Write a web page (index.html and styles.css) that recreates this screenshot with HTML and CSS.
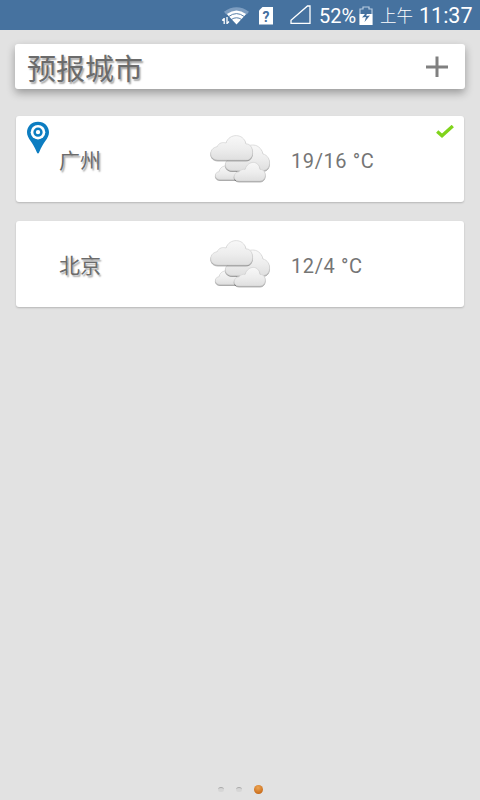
FILE: index.html
```html
<!DOCTYPE html>
<html lang="zh-CN">
<head>
<meta charset="utf-8">
<title>预报城市</title>
<link rel="stylesheet" href="styles.css">
</head>
<body>
<svg class="defs" width="0" height="0" aria-hidden="true">
  <defs>
    <linearGradient id="cloudFill" x1="0" y1="0" x2="0" y2="1">
      <stop offset="0" stop-color="#f8f8f8"/><stop offset=".55" stop-color="#ededed"/><stop offset="1" stop-color="#dfdfdf"/>
    </linearGradient>
    <symbol id="clouds" viewBox="0 0 64 52">
      <g class="cloud" fill="url(#cloudFill)" stroke="#d2d2d2" stroke-width=".7">
        <path d="M12 46.5C6 46.5 6 39 11 38.8C12 32 21 31 24 36C29 36 31 42 28 46.5Z"/>
        <path d="M24 37.5C16 37.5 15 28 22 26C24 21 30 20 34 21C36 10 52 8 55 21C64 23 63.5 37.5 55 37.5Z"/>
        <path d="M31 48C24.5 48 24.5 39.5 31 38.8C33 36.5 35 36 37 36.5C40 27 51 27 52 36.5C59 36 59 48 52 48Z"/>
        <path d="M10 27C.5 27 .5 15 9 13.8C11 9.5 15 9 18 10C21 0 36 0 38 11C46 10 47.5 27 38 27Z"/>
      </g>
    </symbol>
  </defs>
</svg>

<header class="status">
  <svg class="wifi" width="30" height="22" viewBox="0 0 30 22">
    <path d="M3 6.7Q15.5 -2 28 6.7L25.8 9.5Q15.5 2.5 5.2 9.5Z" fill="#7d9dc0"/>
    <path d="M5.8 9Q15.5 1.8 25.2 9L15.5 19.5Z" fill="#fff"/>
    <path d="M7.6 11.6Q15.5 5.6 23.4 11.6M10.3 14.5Q15.5 11 20.7 14.5" fill="none" stroke="#46729f" stroke-width=".9"/>
    <path d="M3.2 19V13M1.2 15.5L3.2 13.5M6 12V19M6 18.5L8 16.5" fill="none" stroke="#fff" stroke-width="1.3"/>
  </svg>
  <span class="sim">?</span>
  <svg class="signal" width="22" height="20" viewBox="0 0 22 20"><path d="M1 18.3H20V1H17.5L1 15.2Z" fill="none" stroke="#fff" stroke-width="1.3"/></svg>
  <span class="percent">52%</span>
  <svg class="battery" width="14" height="20" viewBox="0 0 14 20">
    <path d="M1 8V3H4V1H10V3H13V8" fill="none" stroke="#b8cce1" stroke-width="1.2"/>
    <path d="M.4 8H13.6V19H.4Z" fill="#fff"/>
    <path d="M8.5 5L3 11.5L7 11L5.5 16L11 9.5L7.3 9.9Z" fill="#43709f"/>
  </svg>
  <span class="ampm">上午</span>
  <span class="clock">11:37</span>
</header>

<main>
  <section class="titlebar">
    <h1>预报城市</h1>
    <svg class="add" width="22" height="22" viewBox="0 0 22 22"><path d="M0 11H22M11 .5V21" stroke="#808080" stroke-width="3"/></svg>
  </section>
  <ul class="cities">
    <li class="card">
      <svg class="pin" width="24" height="34" viewBox="0 0 24 34">
        <path d="M12 .7C5.5 .7 1 5.5 1 11.2C1 17.5 7 21 10.8 31.3Q12 33.8 13.2 31.3C17 21 23 17.5 23 11.2C23 5.5 18.5 .7 12 .7Z" fill="#0c7dc1"/>
        <circle cx="12" cy="11.2" r="7.3" fill="#fff"/>
        <circle cx="12" cy="11.2" r="3.4" fill="#fff" stroke="#0c7dc1" stroke-width="2.5"/>
      </svg>
      <span class="name">广州</span>
      <svg class="weather" width="64" height="52"><use href="#clouds"/></svg>
      <span class="temp">19/16 °C</span>
      <svg class="check" width="18" height="14" viewBox="0 0 18 14"><path d="M1.2 6.5L6 10.8L16.8 1" fill="none" stroke="#80d41c" stroke-width="3.3"/></svg>
    </li>
    <li class="card">
      <span class="name">北京</span>
      <svg class="weather" width="64" height="52"><use href="#clouds"/></svg>
      <span class="temp">12/4 °C</span>
    </li>
  </ul>
</main>

<footer class="pager"><i></i><i></i><i class="active"></i></footer>
</body>
</html>
```
FILE: styles.css
```css
* { box-sizing: border-box; }
body {
  margin: 0;
  height: 800px;
  display: flex;
  flex-direction: column;
  overflow: hidden;
  background: #e2e2e2;
  color: #6b6b6b;
  font-family: Roboto, "Noto Sans CJK SC", sans-serif;
}
svg { display: block; flex: none; }
.defs { position: absolute; }
.cloud path { filter: drop-shadow(0 1px .6px rgba(0, 0, 0, .38)); }
.status {
  height: 30px;
  flex: none;
  display: flex;
  align-items: center;
  padding-right: 8px;
  justify-content: flex-end;
  background: #46729f;
  color: #fff;
  line-height: 30px;
  white-space: nowrap;
}
.wifi { margin-right: 8px; margin-top: 2px; }
.sim {
  width: 14px;
  height: 18px;
  margin: 1px 17px 0 0;
  background: #fff;
  clip-path: polygon(4px 0, 100% 0, 100% 100%, 0 100%, 0 4px);
  color: #43709f;
  font-size: 14px;
  font-weight: 700;
  line-height: 20px;
  text-align: center;
}
.signal { margin-right: 7px; }
.percent { width: 39px; font-size: 20px; padding-top: 2px; }
.battery { margin: 1px 7px 0 1px; }
.ampm { width: 39px; font-size: 16.5px; font-weight: 300; padding-top: 4px; }
.clock { width: 53px; font-size: 21.5px; padding-top: 2px; }
main { flex: 1; padding: 14px 15px 0; }
.titlebar {
  height: 45px;
  display: flex;
  align-items: center;
  justify-content: space-between;
  padding: 0 17px 0 12px;
  border-radius: 3px;
  background: #fff;
  box-shadow: 0 4px 8px rgba(0, 0, 0, .32);
}
h1 {
  margin: 0;
  padding-top: 7px;
  font-size: 29px;
  font-weight: 400;
  line-height: 45px;
  text-shadow: 1.5px 1.5px 1.5px #aaa;
}
.cities {
  display: grid;
  gap: 19px;
  list-style: none;
  margin: 27px 1px 0;
  padding: 0;
}
.card {
  position: relative;
  height: 86px;
  display: grid;
  grid-template-columns: 149px 83px 1fr;
  align-items: center;
  padding-left: 43px;
  border-radius: 3px;
  background: #fff;
  box-shadow: 0 1px 2px rgba(0, 0, 0, .2);
}
.name { font-size: 21px; line-height: 30px; margin-top: 4px; text-shadow: 1.5px 1.5px 1.5px #aaa; }
.temp { font-size: 20px; letter-spacing: .6px; margin-top: 4px; color: #757575; }
.pin { position: absolute; left: 10px; top: 5px; }
.check { position: absolute; right: 10px; top: 9px; }
.pager {
  height: 22px;
  display: flex;
  align-items: center;
  justify-content: center;
  gap: 12px;
}
.pager i { width: 6px; height: 5px; border-radius: 50%; background: #d6d6d6; border-top: 1px solid #aaa; }
.pager .active { width: 9px; height: 9px; border: 0; background: radial-gradient(circle at 45% 30%, #eda552, #c96c1b 75%); }
```
